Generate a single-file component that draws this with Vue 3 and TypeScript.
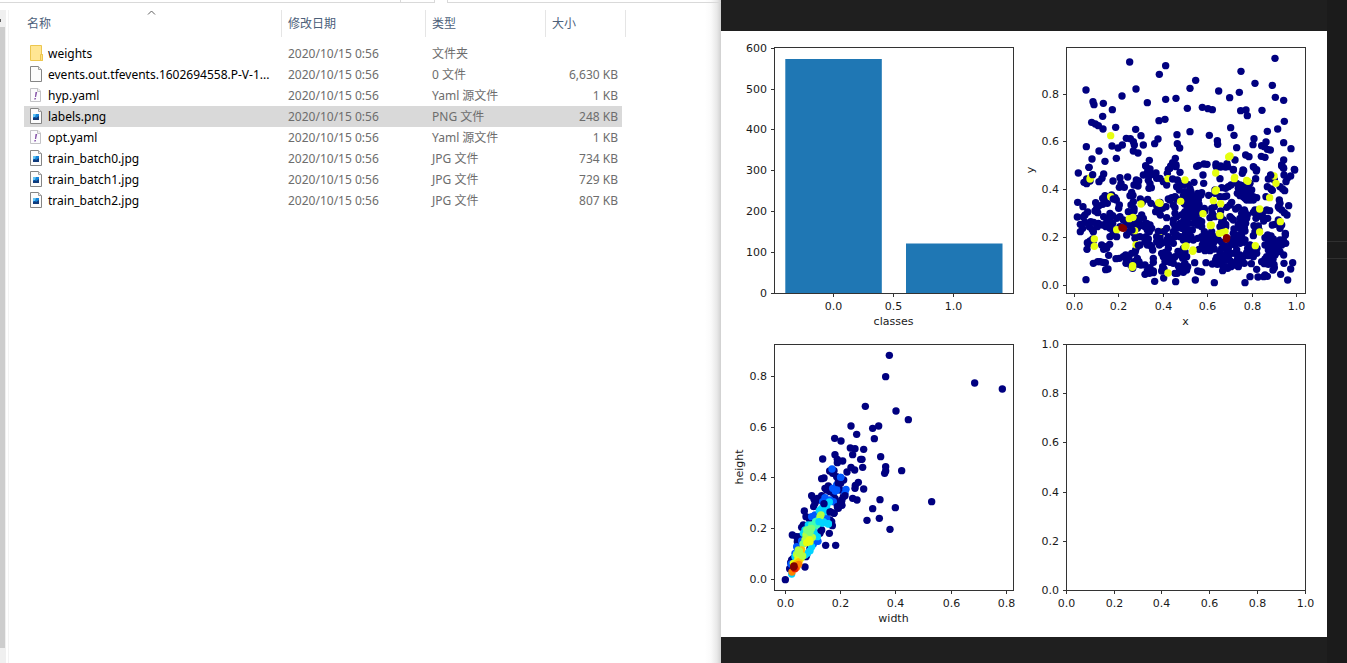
<script setup lang="ts">
type Kind = 'folder' | 'blank' | 'yaml' | 'image'
interface FileRow { name: string; kind: Kind; type: string; size: string; selected?: boolean }

const modified = '2020/10/15 0:56'
const files: FileRow[] = [
  { name: 'weights', kind: 'folder', type: '文件夹', size: '' },
  { name: 'events.out.tfevents.1602694558.P-V-1...', kind: 'blank', type: '0 文件', size: '6,630 KB' },
  { name: 'hyp.yaml', kind: 'yaml', type: 'Yaml 源文件', size: '1 KB' },
  { name: 'labels.png', kind: 'image', type: 'PNG 文件', size: '248 KB', selected: true },
  { name: 'opt.yaml', kind: 'yaml', type: 'Yaml 源文件', size: '1 KB' },
  { name: 'train_batch0.jpg', kind: 'image', type: 'JPG 文件', size: '734 KB' },
  { name: 'train_batch1.jpg', kind: 'image', type: 'JPG 文件', size: '729 KB' },
  { name: 'train_batch2.jpg', kind: 'image', type: 'JPG 文件', size: '807 KB' },
]

interface Tick { at: number; label: string }
interface Plot { x: number; y: number; w: number; h: number; xTicks: Tick[]; yTicks: Tick[]; xLabel?: string; yLabel?: string; yLabelX?: number }

const ticks = (at: number[], labels: string[]): Tick[] => at.map((a, i) => ({ at: a, label: labels[i] }))

const plots: Plot[] = [
  {
    x: 53, y: 16, w: 239, h: 246, xLabel: 'classes',
    xTicks: ticks([112, 172, 232], ['0.0', '0.5', '1.0']),
    yTicks: ticks([262, 221, 180, 139, 98, 58, 17], ['0', '100', '200', '300', '400', '500', '600']),
  },
  {
    x: 345, y: 16, w: 239, h: 246, xLabel: 'x', yLabel: 'y', yLabelX: 313,
    xTicks: ticks([353, 397, 442, 486, 531, 575], ['0.0', '0.2', '0.4', '0.6', '0.8', '1.0']),
    yTicks: ticks([254, 206, 158, 110, 63], ['0.0', '0.2', '0.4', '0.6', '0.8']),
  },
  {
    x: 53, y: 313, w: 239, h: 246, xLabel: 'width', yLabel: 'height', yLabelX: 22,
    xTicks: ticks([64, 119, 174, 230, 285], ['0.0', '0.2', '0.4', '0.6', '0.8']),
    yTicks: ticks([548, 497, 446, 396, 345], ['0.0', '0.2', '0.4', '0.6', '0.8']),
  },
  {
    x: 345, y: 313, w: 239, h: 246,
    xTicks: ticks([345, 393, 440, 488, 536, 584], ['0.0', '0.2', '0.4', '0.6', '0.8', '1.0']),
    yTicks: ticks([559, 510, 461, 411, 362, 313], ['0.0', '0.2', '0.4', '0.6', '0.8', '1.0']),
  },
]

/* Sample positions are stored per tile, in thirds of a figure unit from the tile origin. */
interface Layer { x: number; y: number; color: string; points: string }
const NAVY = '#000080'
const YELLOW = '#e6ff10'
const RED = '#800000'

const layers: Layer[] = [
  { x: 339, y: 9, color: NAVY, points: '209,66 317,77 298,103 78,150 228,147 186,168 99,185 102,194 130,190 157,209 262,188 317,178 348,175 128,229 95,247 106,252 115,257 129,267 167,262 297,242 315,238 227,268 243,287 199,295 211,296 220,305 223,315 294,297 284,311 351,284 352,311 359,324 79,320 156,318 174,324 187,315 250,315 117,333 220,333 234,339 96,357 135,364 169,355 87,382 268,361 257,377 270,387 346,355 338,368 332,378 348,374 325,388' },
  { x: 464, y: 9, color: NAVY, points: '270,55 168,94 32,121 15,145 101,153 134,173 163,157 210,130 262,136 271,172 296,181 7,205 52,202 69,206 82,209 167,212 183,210 187,227 231,211 137,263 147,286 15,275 73,286 97,302 98,313 155,323 247,274 278,267 298,244 296,308 318,326 207,296 204,314 243,306 230,317 238,320 256,330 247,328 182,345 192,350 229,349 240,352 150,360 126,371 93,372 107,381 57,372 66,373 41,376 35,379 145,388 174,390 207,382 215,389 296,360 290,375 295,383 328,388' },
  { x: 339, y: 134, color: NAVY, points: '87,7 55,24 80,42 72,52 90,48 80,56 131,27 126,40 117,50 159,48 180,38 203,36 183,55 178,67 193,67 229,45 236,48 222,60 234,63 250,30 258,4 263,20 268,32 278,28 288,24 290,40 265,46 270,56 274,68 267,70 300,40 310,50 320,60 322,25 330,10 338,2 348,5 360,22 352,45 362,55 350,65 370,60 358,75 375,80 215,82 219,91 210,92 135,92 128,100 134,98 155,90 169,105 165,98 53,112 69,125 107,113 116,123 110,130 128,118 142,115 178,120 176,130 220,110 213,120 222,130 241,102 247,112 263,103 273,115 290,122 300,112 325,102 335,98 345,95 330,105 350,102 370,92 372,115 318,125 345,128 340,120 52,156 83,141 75,150 70,156 105,138 113,143 131,155 150,145 158,152 140,160 205,140 222,138 215,150 180,155 170,160 245,150 250,160 232,160 287,140 296,142 308,130 301,150 320,158 295,135 345,145 365,150 350,155 340,165 375,160 372,145' },
  { x: 339, y: 134, color: NAVY, points: '61,178 75,172 92,170 101,172 68,190 61,200 88,185 96,193 100,200 85,175 115,175 128,180 112,185 140,172 150,168 158,175 138,185 150,190 165,195 160,205 150,215 170,215 158,210 190,165 197,170 180,185 205,180 207,200 200,210 215,178 230,175 240,182 235,170 222,205 215,195 225,190 232,190 240,215 225,220 250,180 260,175 270,180 275,190 268,200 262,195 255,185 258,215 265,222 255,230 270,240 240,240 262,240 275,245 290,215 300,215 300,227 305,235 290,230 298,240 320,190 312,200 345,185 340,175 350,190 360,175 370,170 365,190 375,195 340,200 350,210 360,215 370,225 345,215 325,215 320,225 322,235 340,235 335,225 98,222 90,228 82,233 85,238 81,253 100,228 125,240 137,245 149,238 131,253 140,250 146,271 120,290 128,292 136,293 113,290 100,295 137,314 144,312 168,281 178,280 190,275 197,270 206,277 215,265 200,287 198,295 222,290 218,310 212,300 232,280 237,290 235,298 243,300 255,300 227,255 225,262 231,245 278,255 280,280 280,292 270,308 262,318 280,318 255,328 268,325 280,323 305,265 315,262 325,268 310,275 320,280 330,278 340,280 315,290 330,292 340,295 345,275 308,305 312,312 305,318 354,259 325,250 375,260 362,270 370,250 355,303 372,300 370,310 358,318 352,325 345,325 370,322 311,339 284,349 347,350 368,280 78,344' },
  { x: 464, y: 134, color: NAVY, points: '93,3 107,3 121,6 128,5 54,30 145,15 176,17 172,25 105,41 95,7 205,5 214,18 212,41 290,3 296,10 329,15 297,30 317,33 307,40 303,50 257,30 250,42 268,45 27,52 56,55 8,58 15,70 38,85 50,83 71,91 90,85 110,68 122,70 130,65 138,60 105,95 118,95 125,93 90,75 155,55 165,60 160,70 180,60 195,55 190,68 180,75 200,75 170,80 157,85 165,92 175,95 185,90 195,85 205,95 215,98 195,105 205,105 180,100 185,105 247,65 258,72 262,76 285,65 293,72 299,77 243,95 8,85 18,80 0,90 12,95 25,95 38,100 48,90 5,105 15,110 28,108 40,105 0,118 10,120 22,120 35,115 42,118 8,130 20,132 32,128 40,135 0,140 12,145 25,142 38,145 58,130 60,138 80,130 88,125 82,145 90,155 82,150 75,158 107,138 125,127 135,120 140,112 107,155 115,165 110,172 122,178 105,185 122,185 135,155 145,165 140,160 160,127 152,132 178,135 170,145 180,140 187,150 178,155 165,160 175,165 185,160 170,172 160,178 182,175 165,190 178,188 172,200 180,198 205,142 215,145 223,150 213,160 210,135 235,140 245,135 254,137 230,155 240,160 248,160 236,168 283,105 285,115 280,125 290,135 298,143 306,150 311,122 283,130 207,182 220,183 210,200 222,195 205,212 262,180 270,178 280,165 290,180 285,190 301,205 301,210' },
  { x: 464, y: 134, color: NAVY, points: '5,160 18,155 30,160 42,165 50,170 50,185 38,180 25,175 12,175 0,185 10,195 22,195 12,205 0,210 18,215 8,225 25,225 38,220 50,215 58,200 68,210 80,200 75,220 55,225 65,230 52,240 42,253 60,245 75,240 85,235 60,257 75,257 88,252 100,225 110,232 90,215 147,192 145,205 145,220 160,210 155,225 170,215 180,225 135,228 140,238 150,240 165,235 178,232 110,250 120,243 130,250 105,262 125,262 140,265 150,265 155,255 95,277 105,275 117,272 130,278 92,285 105,290 120,285 136,288 112,300 125,305 113,317 128,310 138,305 150,300 160,305 150,292 165,295 170,285 178,295 165,270 175,275 158,280 195,240 188,250 198,254 208,250 216,250 185,263 195,265 205,262 215,265 190,272 205,275 199,296 215,313 195,335 240,218 248,210 258,213 265,222 250,230 240,240 257,245 265,238 275,232 285,225 295,225 302,235 290,240 280,250 265,255 275,262 285,260 296,270 270,270 255,265 250,255 245,275 230,290 240,282 250,287 264,283 238,296 250,298 267,298 268,308 264,315 297,295 323,293 317,312 287,328 219,336 240,330 247,334 236,335 308,345 180,353 88,353 31,345 29,293 63,293 82,297 90,295 97,298 38,318 50,321 45,320 5,275 0,295 8,305 5,315' },
  { x: 339, y: 9, color: YELLOW, points: '152,287' },
  { x: 464, y: 9, color: YELLOW, points: '135,348 131,351' },
  { x: 339, y: 134, color: YELLOW, points: '92,37 90,42 152,95 243,117 300,115 296,113 324,41 362,109 219,157 208,161 170,194 224,197 303,199 103,222 103,244 228,239 218,302 217,307 324,324 375,245' },
  { x: 464, y: 134, color: YELLOW, points: '92,24 149,37 148,41 185,46 189,49 267,33 273,55 94,75 91,78 85,107 107,116 54,146 224,132 254,98 105,152 76,182 79,180 120,199 112,203 103,205 224,201 286,170 3,243 24,255 23,259 211,242 0,45' },
  { x: 339, y: 134, color: NAVY, points: '338,42 98,29 160,102 312,199 295,199 216,195 235,241' },
  { x: 464, y: 134, color: NAVY, points: '257,31 113,180' },
  { x: 339, y: 134, color: RED, points: '186,188 190,190' },
  { x: 464, y: 134, color: RED, points: '125,218 124,222' },

  { x: 9, y: 309, color: NAVY, points: '478,46 467,110 734,129 817,147 406,199 498,213 535,239 363,258 428,265 446,258 380,283 433,296 314,295 333,303 361,324 375,326 401,328 368,344 392,358 396,358 278,357 315,344 322,358 338,363 322,368 452,350 467,380 467,393 464,400 515,392 605,485 496,503 428,506 450,479 448,535 411,541 480,568 398,382 363,382 374,390 351,396 385,427 376,436 375,445 401,447 368,475 381,480 299,393 308,400 312,392 275,416 282,414 341,420 320,410 325,425 325,440 332,430 330,450 340,470 285,445 295,438 290,450 300,455 245,467 252,478 275,467 262,475 270,480 251,500 255,490 310,460 315,475 335,480 320,490 330,492 336,496 325,505 300,515 312,520 300,540 307,557 305,545 223,513 228,530 238,537 245,545 220,555 215,562 187,585 200,590 210,590 205,600 298,580 287,616 317,616 275,570 270,580 260,590 240,625 228,650 230,645 225,681 179,686 182,668 185,660 190,655 202,605 166,719' },
  { x: 9, y: 309, color: '#0058ff', points: '306,387 332,412 320,435 316,452 308,445 348,448 345,460 285,473 278,485 300,480 290,485 255,525 245,530 264,604 215,603 200,620 203,630 290,535 280,530 195,640 183,672 310,485 250,612' },
  { x: 9, y: 309, color: '#00d4ff', points: '298,486 290,500 275,505 268,512 285,510 265,540 280,545 295,552 275,550 270,545 250,570 260,580 262,590 235,555 240,632 232,640 225,645 200,640 195,650 185,702 258,545 285,515 245,620 220,580 225,570' },
  { x: 9, y: 309, color: NAVY, points: '325,430 282,491 345,467 322,500 335,483 300,516 312,519 273,571' },
  { x: 9, y: 309, color: '#0058ff', points: '332,412 320,450 316,453' },
  { x: 9, y: 309, color: '#40ffb7', points: '257,545 245,555 260,555' },
  { x: 9, y: 309, color: '#b4ff43', points: '273,525 270,530 228,585 240,590 247,592 225,600 205,630 210,640 218,648 200,643' },
  { x: 9, y: 309, color: '#00d4ff', points: '267,545 282,548 295,551' },
  { x: 9, y: 309, color: '#7dff7a', points: '240,567 230,570 245,565 240,577 219,612' },
  { x: 9, y: 309, color: YELLOW, points: '238,600 240,605 230,608 205,650 192,672 213,655 190,670 203,660' },
  { x: 9, y: 309, color: '#ffc800', points: '215,630 212,635 207,665 200,670' },
  { x: 9, y: 309, color: '#b4ff43', points: '208,633 217,648 207,640' },
  { x: 9, y: 309, color: '#ff8200', points: '206,673 200,682 186,696' },
  { x: 9, y: 309, color: '#f02000', points: '195,686' },
  { x: 9, y: 309, color: RED, points: '192,678 191,681' },
]

const dots = layers.flatMap(({ x, y, color, points }) =>
  points.split(' ').map((pair) => {
    const [px, py] = pair.split(',').map(Number)
    return { cx: x + px / 3, cy: y + py / 3, color }
  }),
)
</script>

<template>
  <main class="desktop">
    <section class="explorer" aria-label="文件列表">
      <div class="toolbar-edge">
        <span class="address"></span><span class="refresh"></span><span class="search"></span>
      </div>
      <div class="explorer-body">
        <div class="scrollbar">
          <svg class="scroll-arrow" width="5" height="17" viewBox="0 0 5 17"><path d="M0 9h1v3h-1z" fill="#606060" /></svg>
          <div class="thumb"></div>
        </div>
        <div class="list">
          <table>
            <colgroup><col class="c-name" /><col class="c-date" /><col class="c-type" /><col class="c-size" /></colgroup>
            <thead>
              <tr>
                <th scope="col" class="name-head">
                  名称
                  <svg class="sort" width="9" height="6" viewBox="0 0 9 6"><path d="M1 4.5 4.5 1 8 4.5" fill="none" stroke="#606060" /></svg>
                </th>
                <th scope="col">修改日期</th>
                <th scope="col">类型</th>
                <th scope="col">大小</th>
              </tr>
            </thead>
            <tbody>
              <tr v-for="file in files" :key="file.name" :class="{ selected: file.selected }">
                <td class="name">
                  <span class="entry">
                    <svg width="14" height="17" viewBox="0 0 14 17" aria-hidden="true">
                      <template v-if="file.kind === 'folder'">
                        <path d="M.5.5h11v9h1v6h-12z" fill="#ffe693" stroke="#ecc64f" />
                        <path d="M10.500 9.500h2v6h-2z" fill="#ffe083" stroke="#ecc64f" />
                      </template>
                      <template v-else-if="file.kind === 'yaml'">
                        <path d="M.5 1.500h7.500l2.500 2.500v10.500h-10z" fill="#fbfbfd" stroke="#c3c3c6" />
                        <path d="M7.500 1.500v3h3" fill="#eee" stroke="#c3c3c6" />
                        <path d="M5.500 5h1.700l-1.100 5h-1.200zM4.500 11h1.500l-.3 1.500h-1.500z" fill="#8552a8" />
                      </template>
                      <template v-else>
                        <path d="M.5.5h8l3 3v12h-11z" fill="#fcfcfc" stroke="#858585" />
                        <path d="M8.500.5v3h3" fill="#e8e8e8" stroke="#a0a0a0" />
                        <template v-if="file.kind === 'image'">
                          <path d="M3 6h6v6h-6z" fill="#1683d8" />
                          <path d="M3 6h3l-1 3h-2z" fill="#62c4f4" />
                          <path d="M3 12v-2l2-1 1 1 3-2v4z" fill="#103b7c" />
                        </template>
                      </template>
                    </svg>
                    {{ file.name }}
                  </span>
                </td>
                <td>{{ modified }}</td>
                <td>{{ file.type }}</td>
                <td class="size">{{ file.size }}</td>
              </tr>
            </tbody>
          </table>
        </div>
      </div>
    </section>

    <section class="viewer" aria-label="labels.png">
      <svg class="figure" viewBox="0 0 606 606" role="img" aria-label="classes, x, y, width, height">
        <rect width="606" height="606" fill="#fff" />
        <g fill="#1f77b4">
          <rect x="64.300" y="28" width="96.500" height="235" />
          <rect x="185" y="212.500" width="96.500" height="50.500" />
        </g>
        <circle v-for="(d, i) in dots" :key="i" :cx="d.cx" :cy="d.cy" r="3.700" :fill="d.color" />
        <g v-for="(p, i) in plots" :key="'plot' + i">
          <g class="axis">
            <rect :x="p.x + 0.5" :y="p.y + 0.5" :width="p.w" :height="p.h" />
            <line v-for="t in p.xTicks" :key="'x' + t.label" :x1="t.at + 0.5" :x2="t.at + 0.5" :y1="p.y + p.h" :y2="p.y + p.h + 4" />
            <line v-for="t in p.yTicks" :key="'y' + t.label" :x1="p.x - 3" :x2="p.x + 1" :y1="t.at + 0.5" :y2="t.at + 0.5" />
          </g>
          <text v-for="t in p.xTicks" :key="'tx' + t.label" text-anchor="middle" :x="t.at + 0.5" :y="p.y + p.h + 17">{{ t.label }}</text>
          <text v-for="t in p.yTicks" :key="'ty' + t.label" text-anchor="end" :x="p.x - 7" :y="t.at + 4">{{ t.label }}</text>
          <text v-if="p.xLabel" text-anchor="middle" :x="p.x + p.w / 2" :y="p.y + p.h + 32">{{ p.xLabel }}</text>
          <text v-if="p.yLabel" text-anchor="middle" :transform="`translate(${p.yLabelX} ${p.y + p.h / 2}) rotate(-90)`">{{ p.yLabel }}</text>
        </g>
      </svg>
    </section>
    <aside class="side-strip"><div class="strip-row"></div></aside>
  </main>
</template>

<style>
body {
  margin: 0;
}
</style>

<style scoped>
.desktop {
  display: grid;
  grid-template-columns: minmax(0, 721fr) minmax(0, 606fr) 20px;
  min-height: 100vh;
  font-family: "Noto Sans", "Noto Sans CJK SC", sans-serif;
  font-size: 12px;
  background: #1f1f1f;
}
.explorer {
  display: flex;
  flex-direction: column;
  background: linear-gradient(to left, #d0d0d0 0, #e8e8e8 4px, #fafafa 10px, #fff 16px);
}
.toolbar-edge {
  display: flex;
  height: 3px;
  box-sizing: border-box;
}
.toolbar-edge span {
  box-sizing: border-box;
  border-bottom: 1px solid #d9d9d9;
}
.address {
  width: 401px;
  border-right: 1px solid #d9d9d9;
}
.refresh {
  width: 34px;
  border-right: 1px solid #d9d9d9;
}
.search {
  flex: 1;
  margin-left: 12px;
  border-left: 1px solid #d9d9d9;
}
.explorer-body {
  display: flex;
  flex: 1;
  padding-top: 7px;
}
.scrollbar {
  display: flex;
  flex-direction: column;
  width: 6px;
  padding-bottom: 15px;
  box-sizing: border-box;
  background: #f0f0f0;
}
.scroll-arrow {
  display: block;
}
.thumb {
  flex: 1;
  width: 5px;
  background: #cdcdcd;
}
.list {
  flex: 1;
  min-width: 0;
  margin-left: 2px;
  padding-left: 15px;
  border-left: 1px solid #f3f3f3;
}
table {
  table-layout: fixed;
  width: 602px;
  border-spacing: 0;
  color: #6d6d6d;
}
.c-name { width: 258px; }
.c-date { width: 144px; }
.c-type { width: 120px; }
.c-size { width: 80px; }
th {
  position: relative;
  height: 27px;
  box-sizing: border-box;
  padding: 0 6px;
  border-right: 1px solid #e5e5e5;
  color: #4c607a;
  font-weight: 400;
  line-height: 16px;
  text-align: left;
}
.name-head {
  padding-left: 3px;
}
.sort {
  position: absolute;
  top: 0;
  left: 50%;
  margin-left: -6px;
}
tbody::before {
  content: "";
  display: block;
  height: 6px;
}
td {
  height: 21px;
  box-sizing: border-box;
  padding: 0 6px;
  line-height: 20px;
  white-space: nowrap;
}
.name {
  color: #000;
}
.entry {
  display: flex;
  align-items: center;
  gap: 4px;
}
.size {
  padding-right: 4px;
  border-right: 4px solid transparent;
  background-clip: padding-box;
  text-align: right;
}
.selected td {
  background-color: #d9d9d9;
}
.viewer {
  padding: 31px 0 26px;
}
.figure {
  display: block;
  width: 100%;
  font-family: "DejaVu Sans", sans-serif;
  font-size: 11px;
  fill: #1a1a1a;
}
.axis {
  fill: none;
  stroke: #333;
  stroke-width: 1px;
}
.side-strip {
  padding-top: 241px;
  background: #1b1b1b;
}
.strip-row {
  height: 16px;
  border-top: 1px solid #303030;
  border-bottom: 1px solid #303030;
}
</style>
